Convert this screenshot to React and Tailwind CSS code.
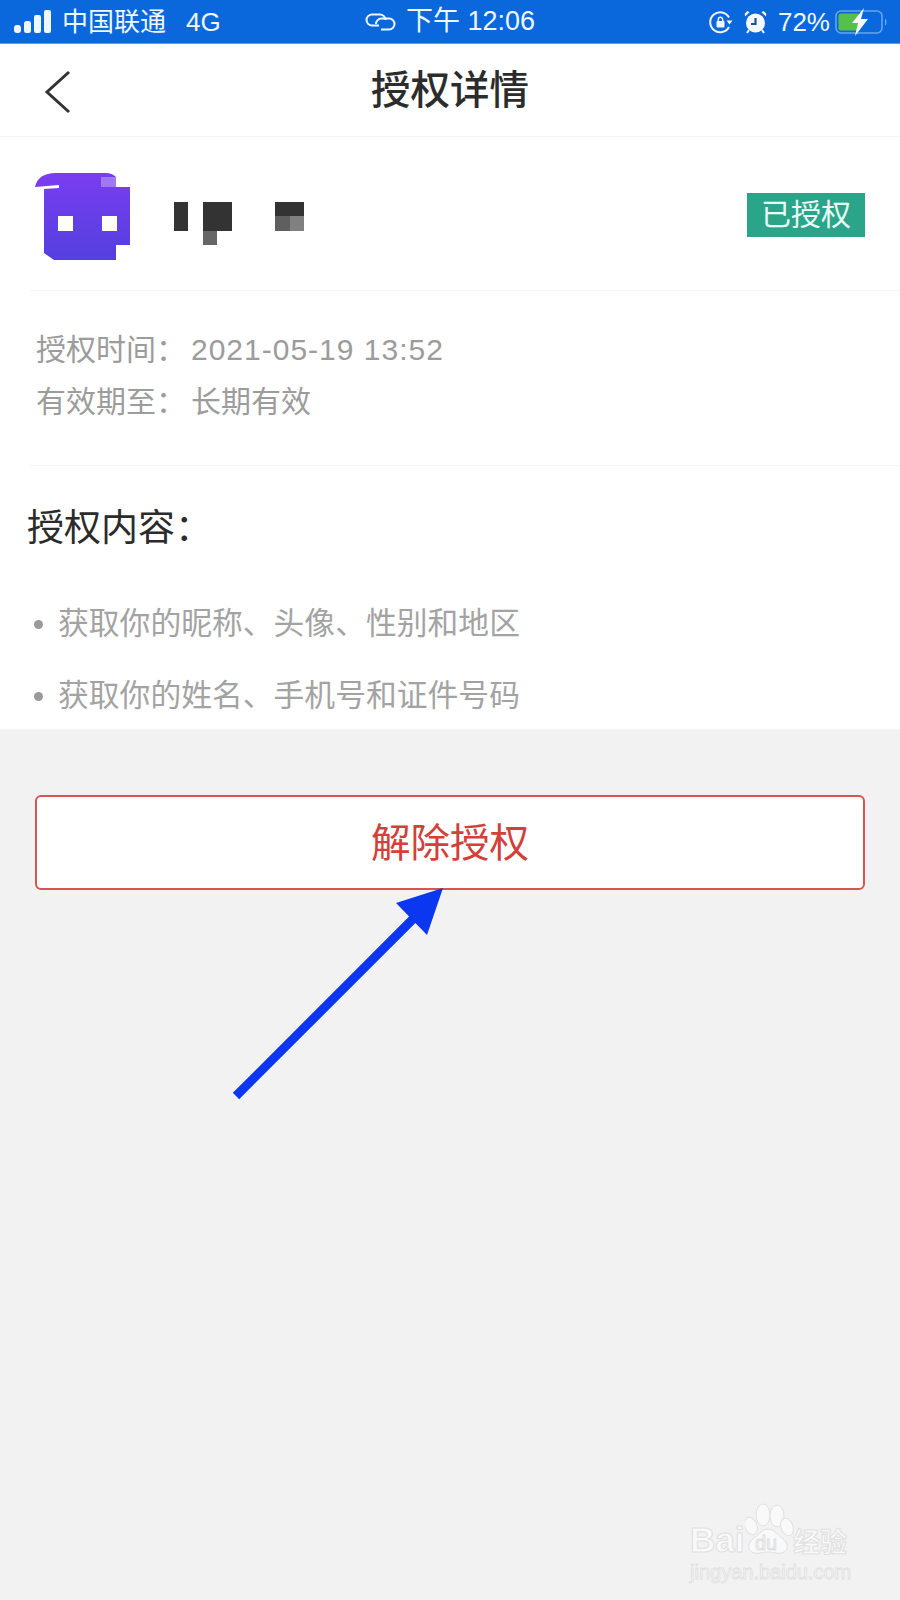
// Authorization detail screen, phone screenshot
const FONT = "font-['Liberation_Sans','Noto_Sans_CJK_SC',sans-serif]";

function SignalIcon() {
  return (
    <svg width="39" height="24" viewBox="0 0 39 24" fill="#eef6ff">
      <rect x="0" y="15" width="7" height="8" rx="3" />
      <rect x="10" y="11" width="7" height="12" rx="2.5" />
      <rect x="20" y="5" width="7" height="18" rx="2" />
      <rect x="30" y="0" width="7" height="23" rx="2" />
    </svg>
  );
}

function LinkIcon() {
  return (
    <svg width="31" height="18" viewBox="0 0 31 18" fill="none" stroke="#eef6ff" strokeWidth="2">
      <path d="M14 12.5H7a5.5 5.5 0 0 1 0-11h8a5.5 5.5 0 0 1 5.5 5.5" />
      <path d="M11 11a5.5 5.5 0 0 1 5.5-5.5H24a5.5 5.5 0 0 1 0 11h-8" />
    </svg>
  );
}

function RotationLockIcon() {
  return (
    <svg width="24" height="24" viewBox="0 0 24 24" fill="none">
      <path d="M20 7.5A10 10 0 1 0 20 17" stroke="#eef6ff" strokeWidth="2" />
      <path d="M17.5 10.5h6l-3 4z" fill="#eef6ff" />
      <rect x="7.5" y="11" width="8" height="6.5" rx="1" fill="#eef6ff" />
      <path d="M9.3 11V9.5a2.2 2.2 0 0 1 4.4 0V11" stroke="#eef6ff" strokeWidth="1.5" />
    </svg>
  );
}

function AlarmIcon() {
  return (
    <svg width="23" height="24" viewBox="0 0 23 24" fill="none">
      <circle cx="11.5" cy="13" r="9.5" fill="#f6f8fb" />
      <path d="M1 6.5 5.5 2.2 3.5 1 0.8 3.5zM22 6.5 17.5 2.2 19.5 1 22.2 3.5z" fill="#f6f8fb" />
      <path d="M11.5 8v6H7" stroke="#20548f" strokeWidth="2.2" />
      <path d="M5 20l-2 3M18 20l2 3" stroke="#f6f8fb" strokeWidth="2" />
    </svg>
  );
}

function BatteryIcon() {
  return (
    <svg width="54" height="28" viewBox="0 0 54 28" fill="none">
      <rect x="1" y="3" width="46" height="22" rx="5" stroke="#62a6ee" strokeWidth="1.6" />
      <rect x="3.5" y="5.5" width="22" height="17" rx="2.5" fill="#56c04b" />
      <path d="M50 10.5c2 .5 2 6.5 0 7z" fill="#62a6ee" />
      <path d="M29 0 17 15h6l-3 13 13-17h-7z" fill="#f7fbff" />
    </svg>
  );
}

function AppLogo() {
  return (
    <svg width="96" height="90" viewBox="35 173 96 90" className="shrink-0">
      <defs>
        <linearGradient id="logoFill" x1="0" y1="0" x2="0" y2="1">
          <stop offset="0" stopColor="#7a3df0" />
          <stop offset="1" stopColor="#5340e0" />
        </linearGradient>
      </defs>
      <path
        d="M35 188Q38 174 56 174H106Q112 174 116 178V188H130V246H116V261H54L44 254V190L59 189V186Z"
        fill="url(#logoFill)"
      />
      <rect x="101" y="178" width="15" height="10" fill="#a277f2" />
      <rect x="58" y="217" width="15" height="15" fill="#fffdf8" />
      <rect x="102" y="217" width="15" height="15" fill="#fffdf8" />
    </svg>
  );
}

// Pixelated app name
function MosaicName() {
  return (
    <svg width="130" height="44" viewBox="174 203 130 44" className="shrink-0">
      <rect x="174" y="203" width="14" height="29" fill="#333" />
      <rect x="203" y="203" width="29" height="29" fill="#333" />
      <rect x="203" y="232" width="14" height="14" fill="#666" />
      <rect x="275" y="203" width="29" height="14" fill="#333" />
      <rect x="275" y="217" width="15" height="15" fill="#5f5f5f" />
      <rect x="290" y="217" width="14" height="15" fill="#808080" />
    </svg>
  );
}

function Watermark() {
  const outline = "[-webkit-text-stroke:1px_#e0e0e0] text-[#f9f9f9]";
  return (
    <div className="absolute left-[690px] top-[1500px] w-[170px] select-none">
      <div className="relative h-[60px]">
        <span className={`absolute left-0 top-[20px] text-[35px] leading-[40px] font-bold font-['Liberation_Sans',sans-serif] ${outline}`}>Bai</span>
        <svg className="absolute left-[55px] top-[3px]" width="50" height="52" viewBox="745 1503 50 52" fill="#f9f9f9" stroke="#e0e0e0" strokeWidth="1">
          <ellipse cx="763" cy="1515" rx="7" ry="11" />
          <ellipse cx="777" cy="1516" rx="7" ry="11" />
          <ellipse cx="751" cy="1526" rx="6" ry="9" transform="rotate(-20 751 1526)" />
          <ellipse cx="787" cy="1527" rx="6" ry="9" transform="rotate(-20 787 1527)" />
          <path d="M754 1553c-7-2-7-10 0-15 6-4 8-9 14-9s9 5 14 9c7 5 7 13 0 15-5 1-9-1-14-1s-9 2-14 1z" />
        </svg>
        <span className="absolute left-[65px] top-[31px] text-[20px] leading-[24px] font-['Liberation_Sans',sans-serif] [-webkit-text-stroke:0.8px_#dcdcdc] text-[#f3f3f3]">du</span>
        <span className={`absolute left-[103px] top-[23px] text-[27px] leading-[36px] font-bold font-['Noto_Sans_CJK_SC',sans-serif] whitespace-nowrap ${outline}`}>经验</span>
      </div>
      <div className="whitespace-nowrap text-[20px] leading-[24px] font-['Liberation_Sans',sans-serif] [-webkit-text-stroke:0.8px_#e0e0e0] text-[#f6f6f6]">jingyan.baidu.com</div>
    </div>
  );
}

function Bullet({ children }) {
  return (
    <li className="flex items-center h-[72px]">
      <span className="w-[9px] h-[9px] rounded-full bg-[#9a9a9a] ml-[5px] mr-[15px]" />
      <span>{children}</span>
    </li>
  );
}

export default function App() {
  return (
    <div className={`relative w-[900px] h-[1600px] overflow-hidden bg-[#f2f2f3] ${FONT}`}>
      {/* status bar */}
      <div className="grid grid-cols-3 items-center h-[44px] bg-[#0a68dc] border-b border-[#5d9ee8] px-[14px] text-[#eef6ff] text-[26px] leading-none">
        <div className="flex items-center">
          <SignalIcon />
          <span className="ml-[9px]">中国联通</span>
          <span className="ml-[20px]">4G</span>
        </div>
        <div className="flex items-center justify-center whitespace-nowrap">
          <LinkIcon />
          <span className="ml-[10px] text-[27px]">下午 12:06</span>
        </div>
        <div className="flex items-center justify-end">
          <RotationLockIcon />
          <span className="ml-[11px]"><AlarmIcon /></span>
          <span className="ml-[11px]">72%</span>
          <span className="ml-[5px] mr-[-3px]"><BatteryIcon /></span>
        </div>
      </div>

      {/* nav */}
      <div className="relative flex items-center justify-center h-[93px] bg-white border-b border-[#f3f3f3]">
        <svg className="absolute left-[44px] top-[26px]" width="28" height="44" viewBox="0 0 28 44" fill="none" stroke="#333" strokeWidth="3">
          <path d="M25 2 3 22l22 20" />
        </svg>
        <h1 className="text-[39.5px] font-medium text-[#2c2c2c] mt-[2px]">授权详情</h1>
      </div>

      <div className="bg-white h-[592px] flex flex-col">
        {/* app row */}
        <div className="flex items-center h-[154px] ml-[30px] pl-[5px] pr-[35px] pt-[7px] border-b border-[#f6f6f6] shrink-0">
          <AppLogo />
          <div className="ml-[43px] mt-[14px]"><MosaicName /></div>
          <span className="ml-auto mb-[4px] w-[118px] h-[44px] flex items-center justify-center bg-[#2ba58a] text-[#eafaf5] text-[30px] leading-none">已授权</span>
        </div>

        {/* dates */}
        <div className="flex flex-col justify-start h-[175px] ml-[30px] pl-[6px] pt-[33px] border-b border-[#f3f3f3] shrink-0 text-[30px] leading-[52px] text-[#9c9c9c]">
          <div className="flex"><span className="w-[155px]">授权时间：</span><span className="tracking-[1px]">2021-05-19 13:52</span></div>
          <div className="flex"><span className="w-[155px]">有效期至：</span><span>长期有效</span></div>
        </div>

        {/* scope */}
        <h2 className="text-[37px] leading-[50px] text-[#2b2b2b] ml-[27px] mt-[38px]">授权内容：</h2>
        <ul className="ml-[29px] mt-[34px] text-[30.8px] text-[#a3a3a3]">
          <Bullet>获取你的昵称、头像、性别和地区</Bullet>
          <Bullet>获取你的姓名、手机号和证件号码</Bullet>
        </ul>
      </div>

      <button className="block w-[830px] h-[95px] ml-[35px] mt-[66px] pt-[3px] rounded-[6px] bg-white border-2 border-[#d9534f] text-[39.5px] text-[#d2403a]">
        解除授权
      </button>

      {/* annotation arrow */}
      <svg className="absolute left-[225px] top-[880px]" width="230" height="225" viewBox="225 880 230 225">
        <path d="M236 1096 418 914" stroke="#0b37f0" strokeWidth="9" fill="none" />
        <path d="M443 888 396 903 427 935z" fill="#0b37f0" />
      </svg>

      <Watermark />
    </div>
  );
}
